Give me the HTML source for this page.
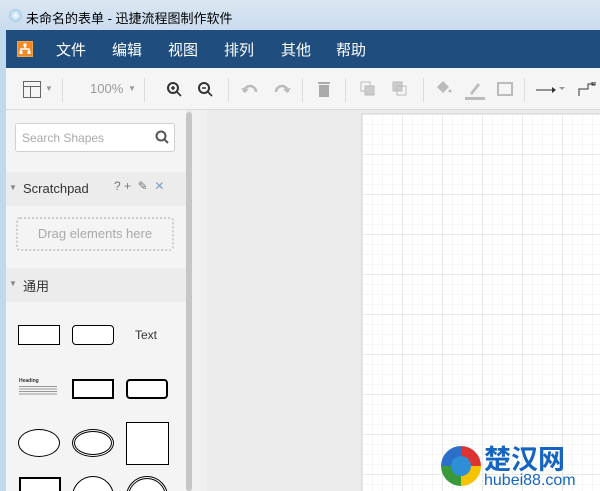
<!DOCTYPE html>
<html style="width:600px;height:491px;overflow:hidden"><head><meta charset="utf-8"><style>
*{margin:0;padding:0;box-sizing:border-box}
body{width:600px;height:491px;overflow:hidden;position:relative;background:#ebebeb;font-family:"Liberation Sans","Noto Sans CJK SC",sans-serif}
.abs{position:absolute}
#title{left:0;top:0;width:600px;height:30px;background:linear-gradient(#dbe7f3,#c9dbee);font-size:13px;color:#000}
#lb{left:0;top:30px;width:6px;height:461px;background:#c2d8ec}
#menu{left:6px;top:30px;width:594px;height:38px;background:#1f4e7e;color:#fff;font-size:15px}
#menu span{position:absolute;top:9px}
#tb{left:6px;top:68px;width:594px;height:42px;background:#f5f5f5;border-bottom:1px solid #dadada}
.sep{position:absolute;top:10px;width:1px;height:24px;background:#dcdcdc}
#side{left:6px;top:110px;width:180px;height:381px;background:#f4f4f4;overflow:hidden}
#sb{left:186px;top:112px;width:6px;height:379px;background:#c6c6c6;border-radius:3px}
#gap{left:192px;top:110px;width:15px;height:381px;background:#f0f0f0}
#page{left:361px;top:113px;width:239px;height:378px;background-color:#fff;
background-image:linear-gradient(#e8e8e8 1px,transparent 1px),linear-gradient(90deg,#e8e8e8 1px,transparent 1px),linear-gradient(#f6f6f6 1px,transparent 1px),linear-gradient(90deg,#f6f6f6 1px,transparent 1px);
background-size:40px 40px,40px 40px,10px 10px,10px 10px;background-position:0 0;border-left:1px solid #ddd;border-top:1px solid #ddd}
.hdr{position:absolute;left:0;width:180px;height:34px;background:#ececec;font-size:13px;color:#333}
.shape{position:absolute;border:1px solid #000;background:#fff}
</style></head><body>
<div id="title" class="abs">
<div class="abs" style="left:9px;top:9px;width:13px;height:13px;border-radius:50%;background:radial-gradient(#fff,#7bb7e0)"></div>
<span class="abs" style="left:26px;top:8px">未命名的表单 - 迅捷流程图制作软件</span></div>
<div id="lb" class="abs"></div>
<div id="menu" class="abs">
<div class="abs" style="left:11px;top:11px;width:16px;height:16px;background:#f08a24;border:1px solid #fff3"><svg width="14" height="14" viewBox="0 0 14 14"><path d="M7 2v4M3 10V7h8v3" stroke="#fff" stroke-width="1.5" fill="none"/><rect x="5.5" y="1.5" width="3" height="3" fill="#fff"/><rect x="1.5" y="9" width="3" height="3" fill="#fff"/><rect x="9.5" y="9" width="3" height="3" fill="#fff"/></svg></div>
<span style="left:50px">文件</span><span style="left:106px">编辑</span><span style="left:162px">视图</span><span style="left:218px">排列</span><span style="left:275px">其他</span><span style="left:330px">帮助</span></div>
<div id="tb" class="abs">
<div class="abs" style="left:17px;top:13px;width:18px;height:17px;border:1px solid #666"><div class="abs" style="left:0;top:4px;width:16px;height:1px;background:#666"></div><div class="abs" style="left:6px;top:4px;width:1px;height:12px;background:#666"></div></div>
<span class="abs" style="left:39px;top:16px;font-size:8px;color:#999">▼</span>
<div class="sep" style="left:56px"></div>
<span class="abs" style="left:84px;top:13px;font-size:13px;color:#999">100%</span><span class="abs" style="left:122px;top:16px;font-size:8px;color:#999">▼</span>
<div class="sep" style="left:138px"></div>
<svg class="abs" style="left:160px;top:13px" width="60" height="18"><g stroke="#333" stroke-width="2" fill="none"><circle cx="7" cy="7" r="5"/><path d="M11 11l4 4M5 7h4M7 5v4" stroke-width="1.6"/><circle cx="38" cy="7" r="5"/><path d="M42 11l4 4M36 7h4" stroke-width="1.6"/></g></svg>
<div class="sep" style="left:222px"></div>
<svg class="abs" style="left:234px;top:14px" width="60" height="16"><path d="M4 10a6 6 0 0 1 12 0" stroke="#bbb" stroke-width="2.5" fill="none"/><path d="M1 6l4 5 4-4z" fill="#bbb"/><path d="M36 10a6 6 0 0 1 12 0" stroke="#bbb" stroke-width="2.5" fill="none"/><path d="M51 6l-4 5-4-4z" fill="#bbb"/></svg>
<div class="sep" style="left:296px"></div>
<svg class="abs" style="left:311px;top:13px" width="14" height="17"><rect x="1" y="1" width="12" height="2" fill="#aaa"/><rect x="2" y="4" width="10" height="12" fill="#aaa"/></svg>
<div class="sep" style="left:339px"></div>
<svg class="abs" style="left:354px;top:13px" width="50" height="18"><g fill="none" stroke="#bbb"><rect x="1" y="1" width="9" height="9"/><rect x="5" y="5" width="9" height="9" fill="#ccc"/><rect x="33" y="1" width="9" height="9" fill="#ccc"/><rect x="37" y="5" width="9" height="9"/></g></svg>
<div class="sep" style="left:417px"></div>
<svg class="abs" style="left:428px;top:11px" width="90" height="22"><path d="M3 8l6-6 6 6-6 6z" fill="#bbb"/><circle cx="16" cy="12" r="1.5" fill="#bbb"/><path d="M36 14l8-10 2 2-8 10z" fill="#bbb"/><rect x="31" y="18" width="20" height="3" fill="#bbb"/><rect x="64" y="4" width="14" height="12" fill="none" stroke="#bbb" stroke-width="2"/></svg>
<div class="sep" style="left:518px"></div>
<svg class="abs" style="left:528px;top:14px" width="66" height="16"><path d="M2 8h16" stroke="#333"/><path d="M18 5l4 3-4 3z" fill="#333"/><path d="M25 5l3 3 3-3z" fill="#999"/><path d="M45 14v-7h9v-5h6" stroke="#333" fill="none"/><rect x="58" y="0" width="3" height="3" fill="none" stroke="#333"/></svg>
</div>
<div id="side" class="abs">
<div class="abs" style="left:9px;top:13px;width:160px;height:29px;background:#fff;border:1px solid #d0d0d0;border-radius:3px"><span class="abs" style="left:6px;top:7px;font-size:12px;color:#aaa">Search Shapes</span>
<svg class="abs" style="left:139px;top:6px" width="15" height="15"><circle cx="6" cy="6" r="4.5" stroke="#555" stroke-width="2" fill="none"/><path d="M9 9l4 4" stroke="#555" stroke-width="2"/></svg></div>
<div class="hdr" style="top:62px"><span class="abs" style="left:3px;top:11px;font-size:8px;color:#888">▼</span><span class="abs" style="left:17px;top:9px">Scratchpad</span><span class="abs" style="left:108px;top:7px;font-size:12px;color:#777">? +&nbsp;&nbsp;✎&nbsp;&nbsp;<span style="color:#7ba3c8">✕</span></span></div>
<div class="abs" style="left:10px;top:107px;width:158px;height:34px;border:2px dotted #ccc;border-radius:4px;text-align:center;line-height:30px;font-size:13px;color:#aaa">Drag elements here</div>
<div class="hdr" style="top:158px"><span class="abs" style="left:3px;top:11px;font-size:8px;color:#888">▼</span><span class="abs" style="left:17px;top:8px">通用</span></div>
<div class="shape" style="left:12px;top:215px;width:42px;height:20px"></div>
<div class="shape" style="left:66px;top:215px;width:42px;height:20px;border-radius:4px"></div>
<span class="abs" style="left:129px;top:218px;font-size:12px;color:#333">Text</span>
<span class="abs" style="left:13px;top:268px;font-size:5px;font-weight:bold;color:#333">Heading</span>
<div class="abs" style="left:13px;top:276px;width:38px;height:10px;background:repeating-linear-gradient(#999 0 1px,transparent 1px 2.5px)"></div>
<div class="shape" style="left:66px;top:269px;width:42px;height:20px;border-width:2px"></div>
<div class="shape" style="left:120px;top:269px;width:42px;height:20px;border-width:2px;border-radius:4px"></div>
<div class="shape" style="left:12px;top:319px;width:42px;height:28px;border-radius:50%"></div>
<div class="shape" style="left:66px;top:319px;width:42px;height:28px;border-radius:50%;border:3px double #000"></div>
<div class="shape" style="left:120px;top:312px;width:43px;height:43px"></div>
<div class="shape" style="left:13px;top:367px;width:42px;height:30px;border-width:2px"></div>
<div class="shape" style="left:66px;top:366px;width:42px;height:42px;border-radius:50%"></div>
<div class="shape" style="left:120px;top:366px;width:42px;height:42px;border-radius:50%;border:3px double #000"></div>
</div>
<div id="sb" class="abs"></div>
<div id="gap" class="abs"></div>
<div id="page" class="abs"></div>
<div class="abs" style="left:441px;top:446px;width:40px;height:40px;border-radius:50%;background:conic-gradient(#d33 0 25%,#f5c400 25% 50%,#3a9a3a 50% 75%,#2a6fc9 75%)"></div>
<div class="abs" style="left:451px;top:456px;width:20px;height:20px;border-radius:50%;background:#2e8ed6"></div>
<span class="abs" style="left:484px;top:443px;font-size:27px;font-weight:bold;color:#1565c0;font-family:'Noto Sans CJK SC',sans-serif;line-height:30px">楚汉网</span>
<span class="abs" style="left:484px;top:472px;font-size:16px;color:#1565c0;line-height:18px">hubei88.com</span>
</body></html>
